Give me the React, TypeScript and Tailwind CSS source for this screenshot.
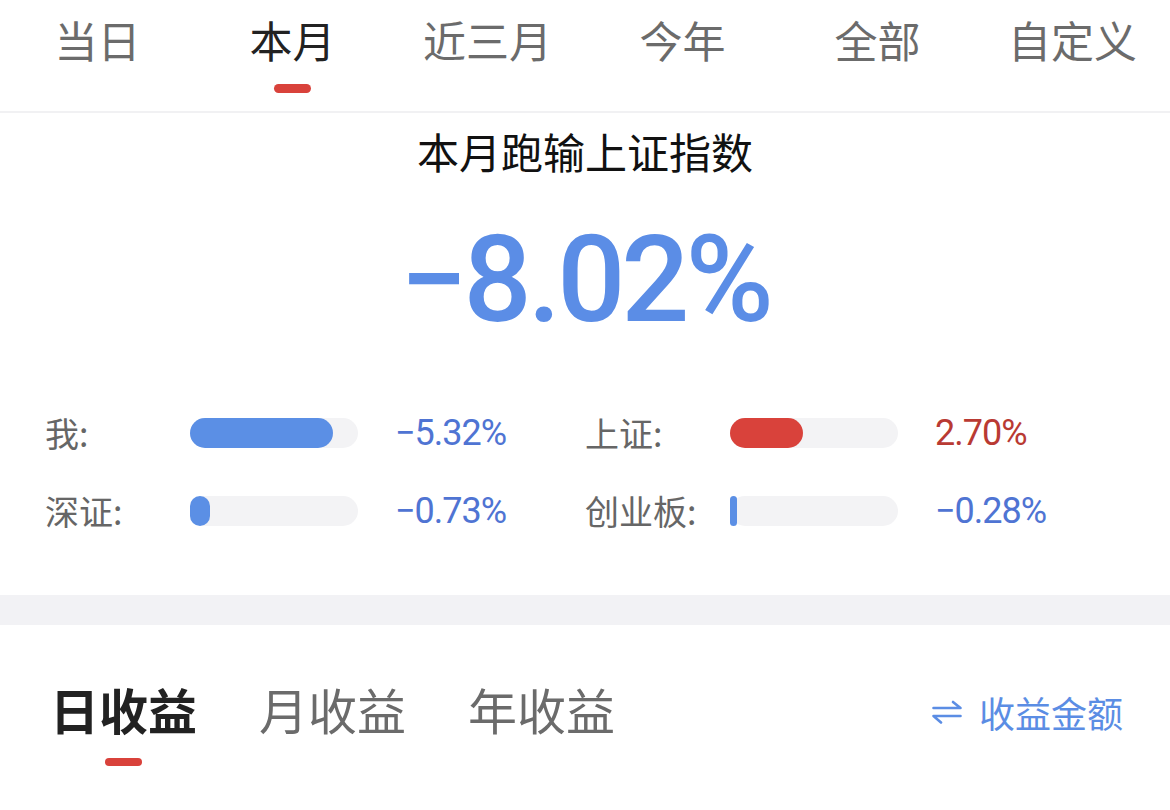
import { useState } from 'react';

const periodTabs = ['当日', '本月', '近三月', '今年', '全部', '自定义'];
const incomeTabs = ['日收益', '月收益', '年收益'];

interface Stat {
  label: string;
  value: string;
  fill: number; // px of 168
  up?: boolean;
}

const stats: Stat[] = [
  { label: '我:', value: '−5.32%', fill: 143 },
  { label: '上证:', value: '2.70%', fill: 73, up: true },
  { label: '深证:', value: '−0.73%', fill: 20 },
  { label: '创业板:', value: '−0.28%', fill: 7 },
];

function SwapIcon() {
  return (
    <svg width="30" height="24" viewBox="0 0 30 24" fill="none" stroke="#5b8de4" strokeWidth="2.6" strokeLinecap="round" strokeLinejoin="round">
      <path d="M1.5 8 H28.5 L21 2" />
      <path d="M28.5 16 H1.5 L9 22.5" />
    </svg>
  );
}

export default function App() {
  const [period, setPeriod] = useState(1);
  const [income, setIncome] = useState(0);

  return (
    <div
      className="w-[1170px] h-[810px] bg-white overflow-hidden"
      style={{ fontFamily: '"Noto Sans CJK SC", "Noto Sans", sans-serif' }}
    >
      {/* Period tabs */}
      <div className="flex h-[113px] border-b-2 border-[#f1f1f3]">
        {periodTabs.map((t, i) => (
          <button
            key={t}
            onClick={() => setPeriod(i)}
            className="flex-1 flex flex-col items-center pt-[18px]"
          >
            <span
              className={`text-[43px] leading-none ${
                period === i ? 'text-[#222]' : 'text-[#6b6b6b]'
              }`}
            >
              {t}
            </span>
            {period === i && (
              <span className="mt-[23px] w-[37px] h-[9px] rounded-full bg-[#d9423b]" />
            )}
          </button>
        ))}
      </div>

      {/* Summary */}
      <div className="flex flex-col items-center">
        <div className="mt-[17px] text-[42px] leading-none text-[#111]">本月跑输上证指数</div>
        <div
          className="mt-[48px] text-[120px] leading-none font-medium text-[#5b8de6] tracking-[-4px]"
          style={{ fontFamily: 'Roboto, "Liberation Sans", sans-serif' }}
        >
          −8.02%
        </div>
      </div>

      {/* Comparison bars */}
      <div className="mt-[73px] px-[45px] grid grid-cols-2 gap-y-[38px]">
        {stats.map((s) => (
          <div key={s.label} className="flex items-center h-[40px]">
            <span className="w-[145px] text-[34px] leading-none text-[#666]">{s.label}</span>
            <div className="w-[168px] h-[30px] rounded-full bg-[#f3f3f5]">
              <div
                className={`h-full rounded-full ${s.up ? 'bg-[#d9423b]' : 'bg-[#5b8fe5]'}`}
                style={{ width: s.fill }}
              />
            </div>
            <span
              className={`ml-[37px] text-[36px] leading-none tracking-[-1px] ${
                s.up ? 'text-[#b93a33]' : 'text-[#4f74d3]'
              }`}
              style={{ fontFamily: 'Roboto, "Liberation Sans", sans-serif' }}
            >
              {s.value}
            </span>
          </div>
        ))}
      </div>

      {/* Divider band */}
      <div className="mt-[64px] h-[30px] bg-[#f2f2f5]" />

      {/* Income tabs */}
      <div className="flex items-start pl-[50px] pr-[47px] mt-[59px]">
        <div className="flex gap-[62px]">
          {incomeTabs.map((t, i) => (
            <button key={t} onClick={() => setIncome(i)} className="flex flex-col items-center">
              <span
                className={`text-[49px] leading-none ${
                  income === i ? 'text-[#222] font-bold' : 'text-[#6b6b6b]'
                }`}
              >
                {t}
              </span>
              {income === i && (
                <span className="mt-[25px] w-[37px] h-[8px] rounded-full bg-[#d9423b]" />
              )}
            </button>
          ))}
        </div>
        <div className="ml-auto flex items-center gap-[17px] mt-[10px] text-[36px] leading-none text-[#5b8de4]">
          <SwapIcon />
          <span>收益金额</span>
        </div>
      </div>
    </div>
  );
}
